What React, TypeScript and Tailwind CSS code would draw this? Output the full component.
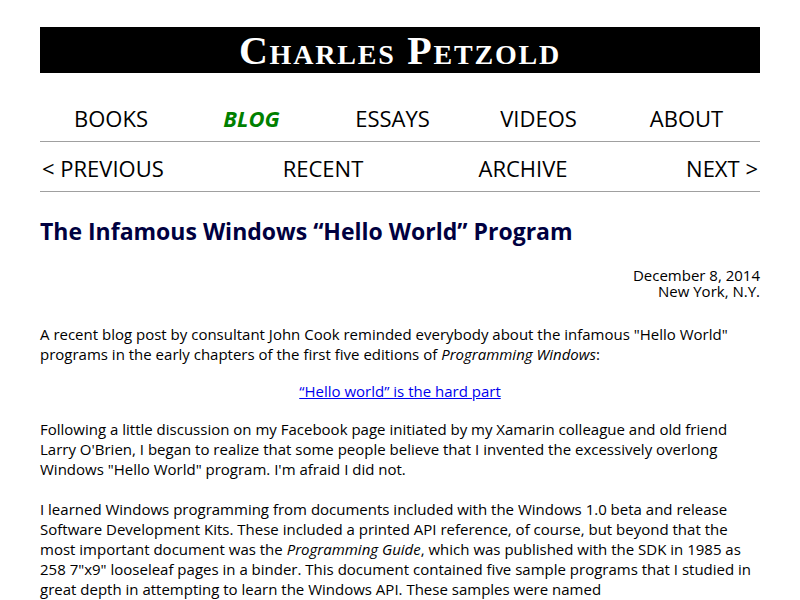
export default function App() {
  const nav = ['BOOKS', 'BLOG', 'ESSAYS', 'VIDEOS', 'ABOUT'];
  return (
    <div className="min-h-screen bg-white text-black font-['Open_Sans',sans-serif]">
      <div className="w-[720px] mx-auto pt-[27px]">
        <header className="bg-black h-[46px] flex items-center justify-center">
          <h1 className="text-white font-['Liberation_Serif',serif] font-bold text-[40px] leading-none [font-variant:small-caps] tracking-[1.8px] pt-[2px]">
            Charles Petzold
          </h1>
        </header>

        <nav className="mt-[22px] grid grid-cols-[142px_139px_143px_149px_147px] h-[47px] items-center border-b border-[#a0a0a0] text-[22px]">
          {nav.map((item) => (
            <div
              key={item}
              className={
                item === 'BLOG'
                  ? 'text-center text-[#008000] italic font-bold'
                  : 'text-center'
              }
            >
              {item}
            </div>
          ))}
        </nav>

        <div className="flex h-[50px] pt-[4px] items-center border-b border-[#a0a0a0] text-[22px]">
          <div className="w-[183px] pl-[2px]">&lt; PREVIOUS</div>
          <div className="w-[200px] text-center">RECENT</div>
          <div className="w-[200px] text-center">ARCHIVE</div>
          <div className="flex-1 text-right pr-[2px]">NEXT &gt;</div>
        </div>

        <h2 className="mt-[24px] text-[23px] font-bold text-[#000040] leading-[30px]">
          The Infamous Windows “Hello World” Program
        </h2>

        <div className="mt-[21px] text-right text-[15px] leading-[16px]">
          <div>December 8, 2014</div>
          <div>New York, N.Y.</div>
        </div>

        <div className="mt-[25px] text-[15px] leading-[20px]">
          <p>
            A recent blog post by consultant John Cook reminded everybody about the infamous "Hello World"
            programs in the early chapters of the first five editions of <i>Programming Windows</i>:
          </p>
          <p className="mt-[17px] text-center">
            <a href="#" className="text-[#0000ee] underline">“Hello world” is the hard part</a>
          </p>
          <p className="mt-[18px]">
            Following a little discussion on my Facebook page initiated by my Xamarin colleague and old friend
            Larry O'Brien, I began to realize that some people believe that I invented the excessively overlong
            Windows "Hello World" program. I'm afraid I did not.
          </p>
          <p className="mt-[20px]">
            I learned Windows programming from documents included with the Windows 1.0 beta and release
            Software Development Kits. These included a printed API reference, of course, but beyond that the
            most important document was the <i>Programming Guide</i>, which was published with the SDK in 1985 as
            258 7"x9" looseleaf pages in a binder. This document contained five sample programs that I studied in
            great depth in attempting to learn the Windows API. These samples were named
          </p>
        </div>
      </div>
    </div>
  );
}
